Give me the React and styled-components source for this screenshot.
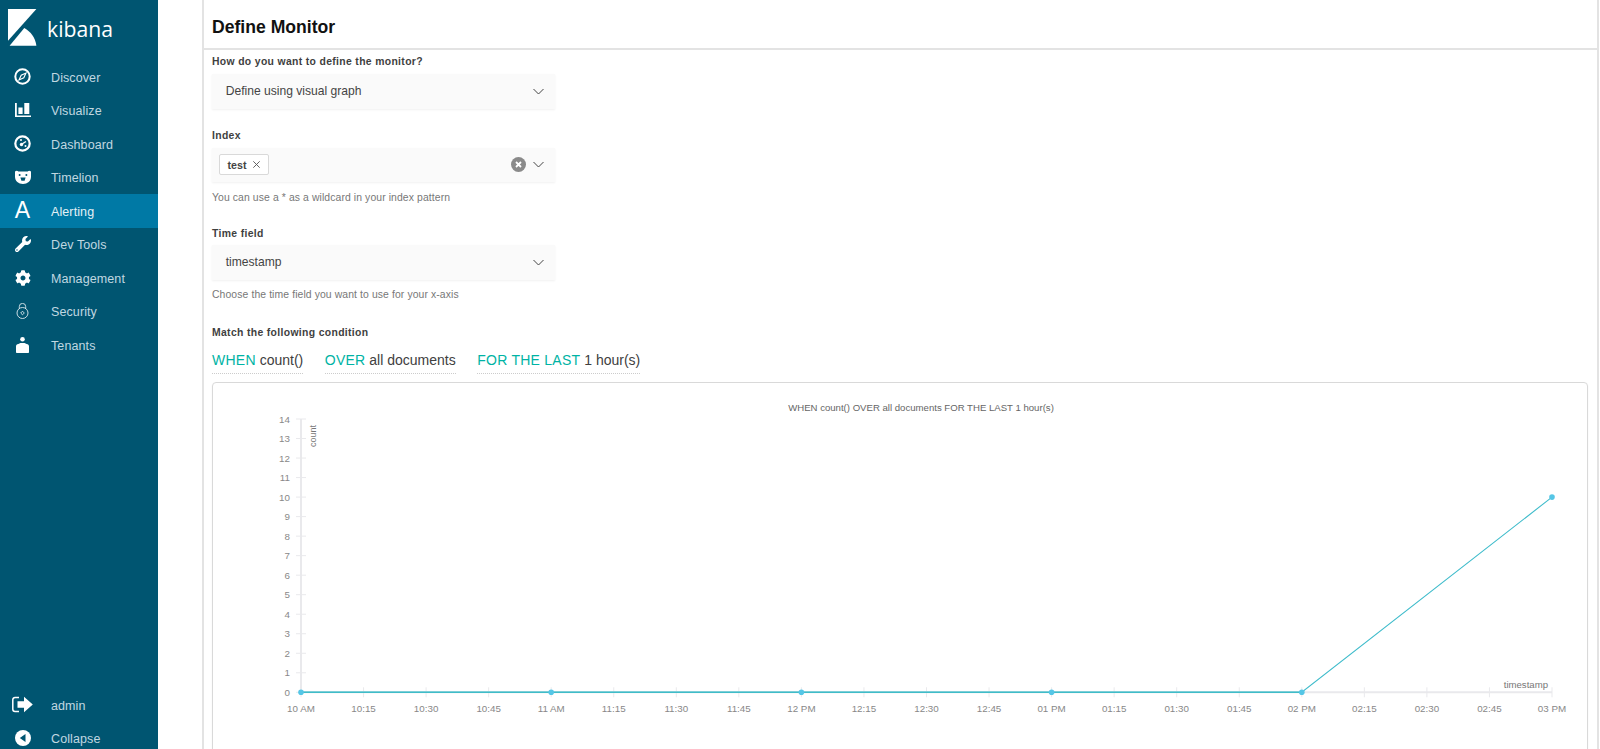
import React from 'react';
import styled, {createGlobalStyle} from 'styled-components';
import {FaWrench, FaCog} from 'react-icons/fa';

const GlobalStyle = createGlobalStyle`
  html, body {
    margin: 0;
    height: 749px;
    overflow: hidden;
    background: #fff;
  }
`;

const Page = styled.div`
  display: flex;
  height: 755px;
  overflow: hidden;
  font-family: "Liberation Sans", sans-serif;
`;

const Sidebar = styled.nav`
  flex: 0 0 157.5px;
  display: flex;
  flex-direction: column;
  background: #005571;
`;

const Logo = styled.div`
  display: flex;
  align-items: center;
  height: 60px;
  padding: 0 0 4px 8px;
  box-sizing: border-box;
  svg { flex: none; }
`;

const LogoText = styled.span`
  margin-left: 10px;
  color: #fff;
  font: 400 21.2px "Open Sans", sans-serif;
`;

const NavItem = styled.div`
  display: flex;
  align-items: center;
  height: 33.5px;
  background: ${p => (p.$active ? '#0079a5' : 'transparent')};
  color: ${p => (p.$active ? '#e4f1f6' : '#c0d8e1')};
  font-size: 12.5px;
`;

const IconSlot = styled.span`
  flex: 0 0 45px;
  display: flex;
  justify-content: center;
  align-items: center;
  color: #fff;
  font-size: 23px;
`;

const NavLabel = styled.span`
  margin-left: 6px;
  padding-top: 2px;
  letter-spacing: 0.1px;
`;

const BottomNav = styled.div`
  margin-top: auto;
`;

const Main = styled.main`
  flex: 1;
  min-width: 0;
  padding: 0 1px 0 44.5px;
`;

const Panel = styled.section`
  height: 100%;
  border-left: 2px solid #e3e3e3;
  border-right: 2px solid #e3e3e3;
`;

const PanelHeader = styled.header`
  display: flex;
  align-items: center;
  height: 42px;
  padding: 6px 0 0 8px;
  border-bottom: 2px solid #e3e3e3;
`;

const Title = styled.h1`
  margin: 0;
  font-size: 17.6px;
  font-weight: 700;
  color: #111;
`;

const PanelBody = styled.div`
  padding: 5px 8px 0;
`;

const Field = styled.div`
  width: 343px;
  margin-top: ${p => p.$top || 0}px;
`;

const Label = styled.div`
  height: 14px;
  font-size: 10.4px;
  font-weight: 700;
  line-height: 14px;
  letter-spacing: 0.34px;
  color: #3f3f3f;
  white-space: nowrap;
`;

const Select = styled.div`
  display: flex;
  align-items: center;
  height: 34.5px;
  margin-top: ${p => p.$top ?? 5}px;
  padding: 0 11px 0 ${p => (p.$tags ? 7 : 13.7)}px;
  box-sizing: border-box;
  background: #fafafa;
  box-shadow: 0 1px 2px rgba(0, 0, 0, 0.06);
  font-size: 12.1px;
  color: #444;
`;

const SelectValue = styled.span`
  flex: 1;
`;

const Tag = styled.span`
  display: inline-flex;
  align-items: center;
  gap: 6px;
  width: 50px;
  height: 21px;
  padding-left: 7.5px;
  box-sizing: border-box;
  border: 1px solid #d9d9d9;
  border-radius: 2px;
  background: #fff;
  font-size: 10.7px;
  font-weight: 700;
  color: #444;
`;

const TagSpacer = styled.span`
  flex: 1;
`;

const ClearIcon = styled.svg`
  margin-right: 7px;
`;

const Help = styled.div`
  margin-top: ${p => p.$top}px;
  height: 14px;
  font-size: 10.4px;
  line-height: 14px;
  letter-spacing: 0.1px;
  color: #777;
  white-space: nowrap;
`;

const Expressions = styled.div`
  display: flex;
  gap: 21.5px;
  margin-top: 9px;
`;

const Expression = styled.div`
  height: 25px;
  box-sizing: border-box;
  border-bottom: 1px dotted #ccc;
  font-size: 14px;
  line-height: 22px;
  color: #404040;
  white-space: nowrap;
`;

const Keyword = styled.span`
  color: #00b3a4;
  letter-spacing: 0.25px;
`;

const ChartBox = styled.div`
  height: 420px;
  margin: 8px 1px 0 0;
  border: 1px solid #d9d9d9;
  border-radius: 4px;
  box-shadow: 0 1px 2px rgba(0, 0, 0, 0.05);
`;

const Chart = styled.svg`
  display: block;
  font-size: 9.8px;
  fill: #888;
`;

const ChevronIcon = () => (
  <svg width="11" height="7" viewBox="0 0 11 7" fill="none" stroke="#444" strokeWidth="1">
    <path d="M.5 1l5 5 5-5" />
  </svg>
);

const KibanaLogo = () => (
  <svg width="29" height="38" viewBox="0 0 29 38" fill="#fff">
    <path d="M0 0h28.4L0 31.8z" />
    <path d="M1.6 36.8L16.3 19c6.5 3.6 11 9.5 12.1 17.8z" />
  </svg>
);

const DiscoverIcon = () => (
  <svg width="17" height="17" viewBox="0 0 17 17" fill="none" stroke="#fff">
    <circle cx="8.5" cy="8.5" r="7.2" strokeWidth="2" />
    <path d="M12 5L9.8 9.8 5 12l2.2-4.8z" fill="none" strokeWidth="1.1" />
  </svg>
);

const VisualizeIcon = () => (
  <svg width="16" height="14" viewBox="0 0 16 14" fill="#fff">
    <path d="M0 0h1.8v12.4H16V14H0z" />
    <path d="M3.4 4.4h4.2V11H3.4zM9.3 0h5v11h-5z" />
  </svg>
);

const DashboardIcon = () => (
  <svg width="17" height="17" viewBox="0 0 17 17">
    <circle cx="8.5" cy="8.5" r="7.2" fill="none" stroke="#fff" strokeWidth="2.2" />
    <circle cx="7.5" cy="9.5" r="1.7" fill="#fff" />
    <path d="M8 9l4-2.5" stroke="#fff" strokeWidth="1.4" />
    <circle cx="7" cy="5" r="1" fill="#fff" />
    <circle cx="11.5" cy="11" r="1" fill="#fff" />
  </svg>
);

const TimelionIcon = () => (
  <svg width="16" height="14" viewBox="0 0 16 14" fill="#fff">
    <path d="M0 1.5C1.2.5 2.4.5 3.4 1.5h9.2c1-1 2.2-1 3.4 0v5.3C16 11 12.4 14 8 14S0 11 0 6.8z" />
    <path d="M5.4 7.5h5.2L9.6 10.8H6.4z" fill="#005571" />
    <circle cx="4.6" cy="5" r="1" fill="#005571" />
    <circle cx="11.4" cy="5" r="1" fill="#005571" />
  </svg>
);

const SecurityIcon = () => (
  <svg width="13" height="16" viewBox="0 0 13 16" fill="none" stroke="#dfeaee" strokeWidth="0.9">
    <circle cx="6.5" cy="10" r="5.5" />
    <path d="M3.3 5.6V3.6a3.2 3.2 0 0 1 6.4 0v2" />
    <path d="M6.5 8.2l1.8 1.8-1.8 1.8L4.7 10z" />
  </svg>
);

const TenantsIcon = () => (
  <svg width="13" height="16" viewBox="0 0 13 16" fill="#fff">
    <circle cx="6.5" cy="2.3" r="2.3" />
    <path d="M0 15.2V9.6C0 8 .8 7.4 2.4 7l2-1h4.2l2 1C12.2 7.4 13 8 13 9.6v5.6a.8.8 0 0 1-.8.8H.8a.8.8 0 0 1-.8-.8z" />
  </svg>
);

const LogoutIcon = () => (
  <svg width="21" height="17" viewBox="0 0 21 17">
    <path d="M7 1.5H3A2.2 2.2 0 0 0 .8 3.7v9.6A2.2 2.2 0 0 0 3 15.5h4" fill="none" stroke="#fff" strokeWidth="1.5" />
    <path d="M5.5 5.3H12V.8l8.8 7.7-8.8 7.7v-4.5H5.5z" fill="#fff" />
  </svg>
);

const CollapseIcon = () => (
  <svg width="16" height="16" viewBox="0 0 16 16">
    <circle cx="8" cy="8" r="8" fill="#fff" />
    <path d="M10.5 4v8L4.8 8z" fill="#005571" />
  </svg>
);

const navItems = [
  {label: 'Discover', icon: <DiscoverIcon />},
  {label: 'Visualize', icon: <VisualizeIcon />},
  {label: 'Dashboard', icon: <DashboardIcon />},
  {label: 'Timelion', icon: <TimelionIcon />},
  {label: 'Alerting', icon: 'A', active: true},
  {label: 'Dev Tools', icon: <FaWrench size={16} />},
  {label: 'Management', icon: <FaCog size={16} />},
  {label: 'Security', icon: <SecurityIcon />},
  {label: 'Tenants', icon: <TenantsIcon />},
];

const xLabels = [
  '10 AM', '10:15', '10:30', '10:45', '11 AM', '11:15', '11:30', '11:45', '12 PM', '12:15', '12:30',
  '12:45', '01 PM', '01:15', '01:30', '01:45', '02 PM', '02:15', '02:30', '02:45', '03 PM',
];

// chart coordinates are relative to the chart box
const x0 = 88;
const xStep = 62.55;
const y0 = 309.3;
const yStep = 19.52;
const xAt = i => x0 + i * xStep;
const yAt = v => y0 - v * yStep;
const axisColor = '#e9e9ec';

const LineChart = () => (
  <Chart width="1375" height="418" viewBox="0 0 1375 418">
    <text x="708" y="28" textAnchor="middle" fontSize="9.6" fill="#666">
      WHEN count() OVER all documents FOR THE LAST 1 hour(s)
    </text>

    <line x1={x0} y1={yAt(14)} x2={x0} y2={y0} stroke={axisColor} strokeWidth="2" />
    {Array.from({length: 15}, (_, v) => (
      <g key={v}>
        <line x1={x0 - 5} y1={yAt(v)} x2={x0 + 5} y2={yAt(v)} stroke={axisColor} />
        <text x={x0 - 11} y={yAt(v) + 3.5} textAnchor="end">{v}</text>
      </g>
    ))}
    <text transform={`translate(102.5 ${yAt(14) + 6}) rotate(-90)`} textAnchor="end" fontSize="9" fill="#777">count</text>

    <line x1={x0} y1={y0} x2={xAt(20)} y2={y0} stroke={axisColor} strokeWidth="2" />
    {xLabels.map((label, i) => (
      <g key={label}>
        <line x1={xAt(i)} y1={y0 - 5} x2={xAt(i)} y2={y0 + 5} stroke={axisColor} />
        <text x={xAt(i)} y={y0 + 20} textAnchor="middle">{label}</text>
      </g>
    ))}
    <text x={xAt(20) - 4} y={y0 - 4} textAnchor="end" fontSize="9.6" fill="#777">timestamp</text>

    <polyline points={`${x0},${y0} ${xAt(16)},${y0} ${xAt(20)},${yAt(10)}`} fill="none" stroke="#3fbccb" strokeWidth="1.1" />
    <line x1={x0} y1={y0} x2={xAt(16)} y2={y0} stroke="#3fbcc8" strokeWidth="1.6" />
    {[0, 4, 8, 12, 16].map(i => (
      <circle key={i} cx={xAt(i)} cy={y0} r="2.8" fill="#55c6e6" />
    ))}
    <circle cx={xAt(20)} cy={yAt(10)} r="2.8" fill="#55c6e6" />
  </Chart>
);

function App() {
  return (
    <Page>
      <GlobalStyle />
      <Sidebar>
        <Logo>
          <KibanaLogo />
          <LogoText>kibana</LogoText>
        </Logo>
        {navItems.map(item => (
          <NavItem key={item.label} $active={item.active}>
            <IconSlot>{item.icon}</IconSlot>
            <NavLabel>{item.label}</NavLabel>
          </NavItem>
        ))}
        <BottomNav>
          <NavItem>
            <IconSlot><LogoutIcon /></IconSlot>
            <NavLabel>admin</NavLabel>
          </NavItem>
          <NavItem>
            <IconSlot><CollapseIcon /></IconSlot>
            <NavLabel>Collapse</NavLabel>
          </NavItem>
        </BottomNav>
      </Sidebar>

      <Main>
        <Panel>
          <PanelHeader>
            <Title>Define Monitor</Title>
          </PanelHeader>
          <PanelBody>
            <Field>
              <Label>How do you want to define the monitor?</Label>
              <Select>
                <SelectValue>Define using visual graph</SelectValue>
                <ChevronIcon />
              </Select>
            </Field>
            <Field $top={20}>
              <Label>Index</Label>
              <Select $tags>
                <Tag>
                  test
                  <svg width="7" height="7" viewBox="0 0 7 7" stroke="#555" strokeWidth="0.9">
                    <path d="M.3.3l6.4 6.4M6.7.3L.3 6.7" />
                  </svg>
                </Tag>
                <TagSpacer />
                <ClearIcon width="15" height="15" viewBox="0 0 15 15">
                  <circle cx="7.5" cy="7.5" r="7.5" fill="#8a8a8a" />
                  <path d="M5 5l5 5M10 5l-5 5" stroke="#fff" strokeWidth="1.8" />
                </ClearIcon>
                <ChevronIcon />
              </Select>
              <Help $top={9}>You can use a * as a wildcard in your index pattern</Help>
            </Field>
            <Field $top={22}>
              <Label>Time field</Label>
              <Select $top={4}>
                <SelectValue>timestamp</SelectValue>
                <ChevronIcon />
              </Select>
              <Help $top={8}>Choose the time field you want to use for your x-axis</Help>
            </Field>
            <Field $top={24}>
              <Label>Match the following condition</Label>
              <Expressions>
                <Expression><Keyword>WHEN</Keyword> count()</Expression>
                <Expression><Keyword>OVER</Keyword> all documents</Expression>
                <Expression><Keyword>FOR THE LAST</Keyword> 1 hour(s)</Expression>
              </Expressions>
            </Field>
            <ChartBox>
              <LineChart />
            </ChartBox>
          </PanelBody>
        </Panel>
      </Main>
    </Page>
  );
}

export default App;
